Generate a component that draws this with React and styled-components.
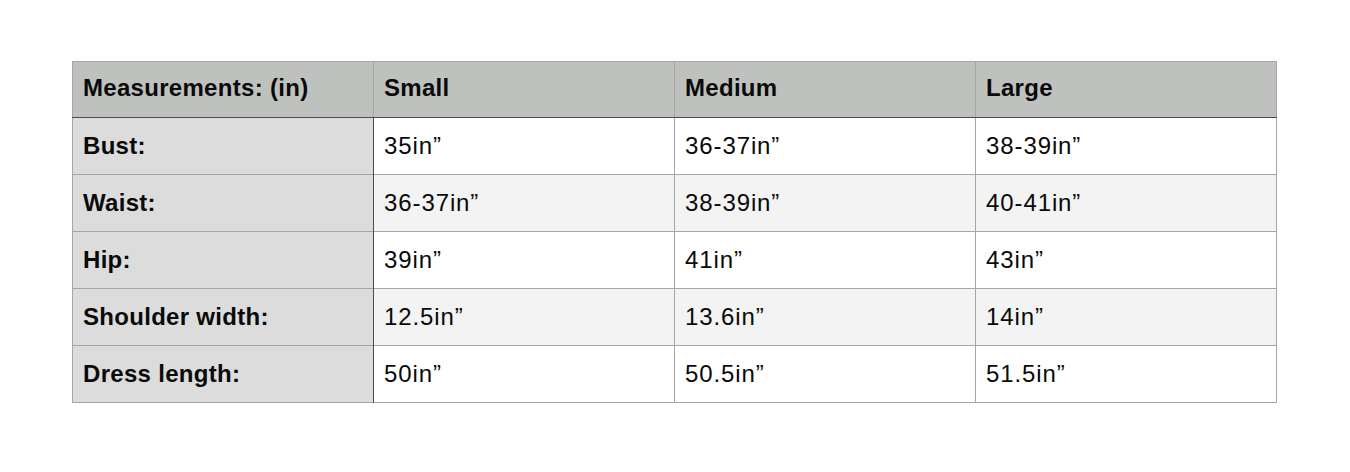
import React from "react";
import styled, { createGlobalStyle } from "styled-components";

const Global = createGlobalStyle`
  html, body { margin: 0; padding: 0; background: #ffffff; }
  body { font-family: "Liberation Sans", Arial, Helvetica, sans-serif; }
`;

const Page = styled.div`
  width: 1350px;
  height: 472px;
  padding: 61px 0 0 72px;
  box-sizing: border-box;
`;

const Table = styled.table`
  border-collapse: collapse;
  table-layout: fixed;
  width: 1205px;
  border: 1px solid #a6a6a6;
`;

const Col = styled.col`
  width: 301px;
`;

const HeadCell = styled.th`
  height: 56px;
  padding: 0 0 3px 10px;
  text-align: left;
  vertical-align: middle;
  background: #bfc1bf;
  border-left: 1px solid #a6a6a6;
  border-bottom: 1px solid #4d4d4d;
  font-size: 24px;
  font-weight: 700;
  letter-spacing: 0.3px;
  color: #0a0a0a;
  box-sizing: border-box;
`;

const RowHead = styled.th`
  height: 56px;
  padding: 0 0 0 10px;
  text-align: left;
  vertical-align: middle;
  background: #dcdcdc;
  border-top: 1px solid #a6a6a6;
  border-right: 1px solid #4d4d4d;
  font-size: 24px;
  font-weight: 700;
  letter-spacing: 0.3px;
  color: #0a0a0a;
`;

const Cell = styled.td`
  height: 56px;
  padding: 0 0 0 10px;
  vertical-align: middle;
  background: ${(p) => (p.$alt ? "#f3f3f3" : "#ffffff")};
  border-top: 1px solid #a6a6a6;
  border-left: 1px solid #a6a6a6;
  font-size: 24px;
  font-weight: 400;
  letter-spacing: 0.9px;
  color: #0a0a0a;
`;

const headers = ["Measurements: (in)", "Small", "Medium", "Large"];
const rows = [
  ["Bust:", "35in”", "36-37in”", "38-39in”"],
  ["Waist:", "36-37in”", "38-39in”", "40-41in”"],
  ["Hip:", "39in”", "41in”", "43in”"],
  ["Shoulder width:", "12.5in”", "13.6in”", "14in”"],
  ["Dress length:", "50in”", "50.5in”", "51.5in”"],
];

export default function App() {
  return (
    <>
      <Global />
      <Page>
        <Table>
          <colgroup>
            <Col />
            <Col />
            <Col />
            <Col />
          </colgroup>
          <thead>
            <tr>
              {headers.map((h) => (
                <HeadCell key={h}>{h}</HeadCell>
              ))}
            </tr>
          </thead>
          <tbody>
            {rows.map((r, ri) => (
              <tr key={r[0]}>
                <RowHead>{r[0]}</RowHead>
                {r.slice(1).map((c, ci) => (
                  <Cell key={ci} $alt={ri % 2 === 1}>
                    {c}
                  </Cell>
                ))}
              </tr>
            ))}
          </tbody>
        </Table>
      </Page>
    </>
  );
}
